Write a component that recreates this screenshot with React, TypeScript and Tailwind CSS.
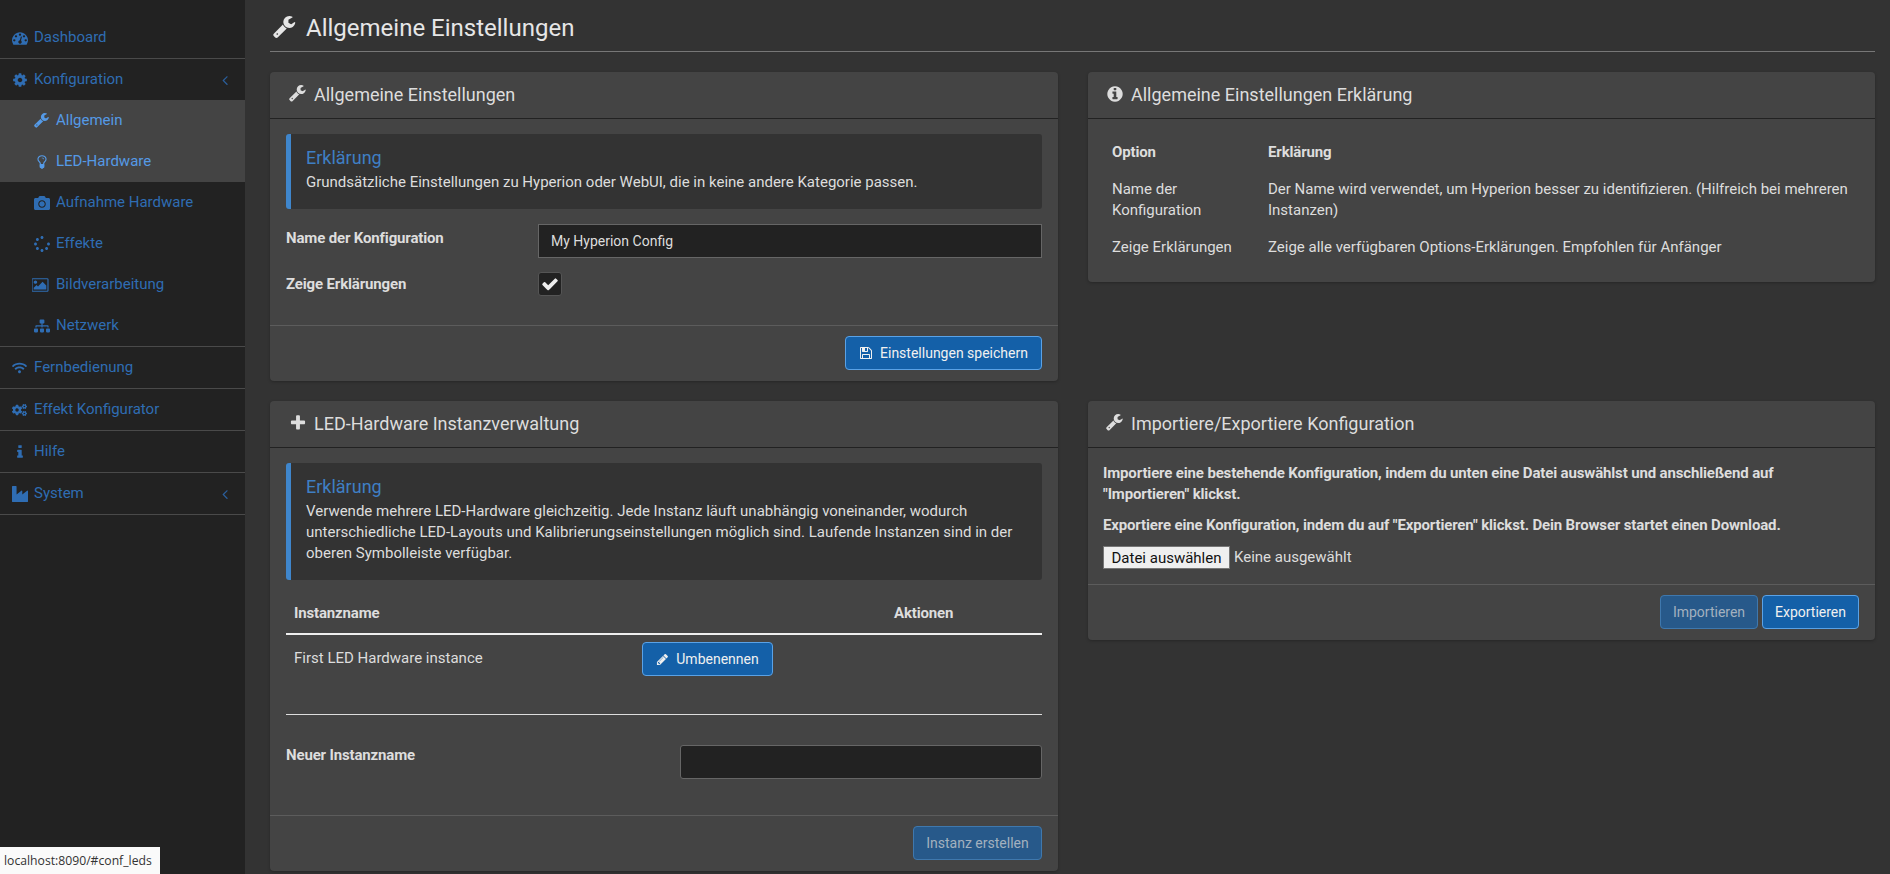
import React from "react";
import { FaCamera, FaSpinner, FaSitemap, FaWifi, FaCogs } from "react-icons/fa";

const Ic = ({ d, w = 1792 }: { d: string; w?: number }) => (
  <svg viewBox={`0 0 ${w} 1792`} height="1em" width={`${w / 1792}em`} fill="currentColor" className="shrink-0">
    <path d={d} />
  </svg>
);

const P = {
  wrench: "M384 1344q0-26-19-45t-45-19-45 19-19 45 19 45 45 19 45-19 19-45zm644-420l-682 682q-37 37-90 37-52 0-91-37l-106-108q-38-36-38-90 0-53 38-91l681-681q39 98 114.5 173.5t173.5 114.5zm634-435q0 39-23 106-47 134-164.5 217.5t-258.5 83.5q-185 0-316.5-131.5t-131.5-316.5 131.5-316.5 316.5-131.5q58 0 121.5 16.5t107.5 46.5q16 11 16 28t-16 28l-293 169v224l193 107q5-3 79-48.5t135.5-81 70.5-35.5q15 0 23.5 10t8.5 25z",
  dash: "M384 1152q0-53-37.5-90.5t-90.5-37.5-90.5 37.5-37.5 90.5 37.5 90.5 90.5 37.5 90.5-37.5 37.5-90.5zm192-448q0-53-37.5-90.5t-90.5-37.5-90.5 37.5-37.5 90.5 37.5 90.5 90.5 37.5 90.5-37.5 37.5-90.5zm428 481l101-382q6-26-7.5-48.5t-38.5-29.5-48 6.5-30 39.5l-101 382q-60 5-107 43.5t-63 98.5q-20 77 20 146t117 89 146-20 89-117q16-60-6-117t-72-91zm660-33q0-53-37.5-90.5t-90.5-37.5-90.5 37.5-37.5 90.5 37.5 90.5 90.5 37.5 90.5-37.5 37.5-90.5zm-640-640q0-53-37.5-90.5t-90.5-37.5-90.5 37.5-37.5 90.5 37.5 90.5 90.5 37.5 90.5-37.5 37.5-90.5zm448 192q0-53-37.5-90.5t-90.5-37.5-90.5 37.5-37.5 90.5 37.5 90.5 90.5 37.5 90.5-37.5 37.5-90.5zm320 448q0 261-141 483-19 29-54 29h-1402q-35 0-54-29-141-221-141-483 0-182 71-348t191-286 286-191 348-71 348 71 286 191 191 286 71 348z",
  bulb: "M1120 576q0 13-9.5 22.5t-22.5 9.5-22.5-9.5-9.5-22.5q0-46-54-71t-106-25q-13 0-22.5-9.5t-9.5-22.5 9.5-22.5 22.5-9.5q50 0 99.5 16t87 54 37.5 90zm160 0q0-72-34.5-134t-90-101.5-123-62-136.5-22.5-136.5 22.5-123 62-90 101.5-34.5 134q0 101 68 180 10 11 30.5 33t30.5 33q128 153 141 298h228q13-145 141-298 10-11 30.5-33t30.5-33q68-79 68-180zm128 0q0 155-103 268-45 49-74.5 87t-59.5 95.5-34 107.5q47 28 47 82 0 37-25 64 25 27 25 64 0 52-45 81 13 23 13 47 0 46-31.5 71t-77.5 25q-20 44-60 70t-87 26-87-26-60-70q-46 0-77.5-25t-31.5-71q0-24 13-47-45-29-45-81 0-37 25-64-25-27-25-64 0-54 47-82-4-50-34-107.5t-59.5-95.5-74.5-87q-103-113-103-268 0-99 44.5-184.5t117-142 164-89 186.5-32.5 186.5 32.5 164 89 117 142 44.5 184.5z",
  picture: "M576 576q0 80-56 136t-136 56-136-56-56-136 56-136 136-56 136 56 56 136zm1024 384v448h-1408v-192l320-320 160 160 512-512zm96-704h-1600q-13 0-22.5 9.5t-9.5 22.5v1216q0 13 9.5 22.5t22.5 9.5h1600q13 0 22.5-9.5t9.5-22.5v-1216q0-13-9.5-22.5t-22.5-9.5zm160 32v1216q0 66-47 113t-113 47h-1600q-66 0-113-47t-47-113v-1216q0-66 47-113t113-47h1600q66 0 113 47t47 113z",
  floppy: "M512 1536h768v-384h-768v384zm896 0h128v-896q0-14-10-38.5t-20-34.5l-281-281q-10-10-34-20t-39-10v416q0 40-28 68t-68 28h-576q-40 0-68-28t-28-68v-416h-128v1280h128v-416q0-40 28-68t68-28h832q40 0 68 28t28 68v416zm-384-928v-320q0-13-9.5-22.5t-22.5-9.5h-192q-13 0-22.5 9.5t-9.5 22.5v320q0 13 9.5 22.5t22.5 9.5h192q13 0 22.5-9.5t9.5-22.5zm640 32v928q0 40-28 68t-68 28h-1344q-40 0-68-28t-28-68v-1344q0-40 28-68t68-28h928q40 0 88 20t76 48l280 280q28 28 48 76t20 88z",
  check: "M1671 566q0 40-28 68l-724 724-136 136q-28 28-68 28t-68-28l-136-136-362-362q-28-28-28-68t28-68l136-136q28-28 68-28t68 28l294 295 656-657q28-28 68-28t68 28l136 136q28 28 28 68z",
  info: "M1216 1344v128q0 26-19 45t-45 19h-512q-26 0-45-19t-19-45v-128q0-26 19-45t45-19h64v-384h-64q-26 0-45-19t-19-45v-128q0-26 19-45t45-19h384q26 0 45 19t19 45v576h64q26 0 45 19t19 45zm-128-1152v192q0 26-19 45t-45 19h-256q-26 0-45-19t-19-45v-192q0-26 19-45t45-19h256q26 0 45 19t19 45z",
  pencil: "M491 1536l91-91-235-235-91 91v107h128v128h107zm523-928q0-22-22-22-10 0-17 7l-542 542q-7 7-7 17 0 22 22 22 10 0 17-7l542-542q7-7 7-17zm-54-192l416 416-832 832h-416v-416zm683 96q0 53-37 90l-166 166-416-416 166-165q36-38 90-38 53 0 91 38l235 234q37 39 37 91z",
  plus: "M1600 736v192q0 40-28 68t-68 28h-416v416q0 40-28 68t-68 28h-192q-40 0-68-28t-28-68v-416h-416q-40 0-68-28t-28-68v-192q0-40 28-68t68-28h416v-416q0-40 28-68t68-28h192q40 0 68 28t28 68v416h416q40 0 68 28t28 68z",
  infoCircle: "M1152 1376v-160q0-14-9-23t-23-9h-96v-512q0-14-9-23t-23-9h-320q-14 0-23 9t-9 23v160q0 14 9 23t23 9h96v320h-96q-14 0-23 9t-9 23v160q0 14 9 23t23 9h448q14 0 23-9t9-23zm-128-896v-160q0-14-9-23t-23-9h-192q-14 0-23 9t-9 23v160q0 14 9 23t23 9h192q14 0 23-9t9-23zm640 416q0 209-103 385.5t-279.5 279.5-385.5 103-385.5-103-279.5-279.5-103-385.5 103-385.5 279.5-279.5 385.5-103 385.5 103 279.5 279.5 103 385.5z",
  industry: "M448 0q26 0 45 19t19 45v891l536-429q17-14 40-14 26 0 45 19t19 45v379l536-429q17-14 40-14 26 0 45 19t19 45v1152q0 26-19 45t-45 19h-1664q-26 0-45-19t-19-45v-1664q0-26 19-45t45-19h384z",
  angle: "M1203 544q0 13-10 23l-393 393 393 393q10 10 10 23t-10 23l-50 50q-10 10-23 10t-23-10l-466-466q-10-10-10-23t10-23l466-466q10-10 23-10t23 10l50 50q10 10 10 23z",
  cog: "M1152 896q0-106-75-181t-181-75-181 75-75 181 75 181 181 75 181-75 75-181zm512-109v222q0 12-8 23t-20 13l-185 28q-19 54-39 91 35 50 107 138 10 12 10 25t-9 23q-27 37-99 108t-94 71q-12 0-26-9l-138-108q-44 23-91 38-16 136-29 186-7 28-36 28h-222q-14 0-24.5-8.5t-11.5-21.5l-28-184q-49-16-90-37l-141 107q-10 9-25 9-14 0-25-11-126-114-165-168-7-10-7-23 0-12 8-23 15-21 51-66.5t54-70.5q-27-50-41-99l-183-27q-13-2-21-12.5t-8-23.5v-222q0-12 8-23t19-13l186-28q14-46 39-92-40-57-107-138-10-12-10-24 0-10 9-23 26-36 98.5-107.5t94.5-71.5q13 0 26 10l138 107q44-23 91-38 16-136 29-186 7-28 36-28h222q14 0 24.5 8.5t11.5 21.5l28 184q49 16 90 37l142-107q9-9 24-9 13 0 25 10 129 119 165 170 7 8 7 22 0 12-8 23-15 21-51 66.5t-54 70.5q26 50 41 98l183 28q13 2 21 12.5t8 23.5z",
};

const Top = ({ icon, label, chevron, border = true }: { icon: React.ReactNode; label: string; chevron?: boolean; border?: boolean }) => (
  <div className={`flex items-center pl-[12px] pr-[12px] text-[#2f6db3] ${border ? "h-[42px] border-b border-[#4a4a4a]" : "h-[41px]"}`}>
    <span className="w-[15px] flex justify-center text-[16px] mr-[7px]">{icon}</span>
    <span>{label}</span>
    {chevron && <span className="ml-auto text-[16px] text-[#2b5f9c]"><Ic d={P.angle} /></span>}
  </div>
);

const Sub = ({ icon, label, active }: { icon: React.ReactNode; label: string; active?: boolean }) => (
  <div className={`h-[41px] flex items-center pl-[33px] ${active ? "bg-[#444444] text-[#559ae6]" : "text-[#2f6db3]"}`}>
    <span className="w-[17px] flex justify-center text-[16px] mr-[6px]">{icon}</span>
    <span>{label}</span>
  </div>
);

const Panel = ({ icon, title, right, children }: { icon: React.ReactNode; title: string; right?: boolean; children: React.ReactNode }) => (
  <div className="bg-[#444444] rounded-[4px] shadow-[0_1px_3px_rgba(0,0,0,0.25)] flex flex-col">
    <div className={`h-[47px] border-b border-[#222222] flex items-center pb-[2px] text-[18px] text-[#dddddd] ${right ? "pl-[18px]" : "pl-[19px]"}`}>
      <span className="w-[18px] flex justify-center text-[18px] mr-[7px]">{icon}</span>
      <span>{title}</span>
    </div>
    {children}
  </div>
);

const Callout = ({ children }: { children: React.ReactNode }) => (
  <div className="bg-[#333333] border-l-[5px] border-[#3f86cc] rounded-[3px] pl-[15px] pr-[15px] pt-[11px] pb-[16px] leading-[21px] text-[#dddddd]">
    <div className="text-[18px] leading-[26px] mb-[1px] text-[#3f7fc4]">Erklärung</div>
    {children}
  </div>
);

const Btn = ({ children, disabled }: { children: React.ReactNode; disabled?: boolean }) => (
  <button className={`w-full h-[34px] rounded-[4px] border flex items-center justify-center text-[14px] ${disabled ? "bg-[#27598a] border-[#3f78ad] text-[#a3b1bf]" : "bg-[#1460a8] border-[#5aa2e6] text-[#f0f0f0]"}`}>
    {children}
  </button>
);

export default function App() {
  return (
    <div className="relative flex h-screen w-full overflow-hidden bg-[#333333] text-[15px] leading-[21px] text-[#dddddd] font-['Roboto',sans-serif]">
      <aside className="w-[245px] shrink-0 bg-[#222222] pt-[17px]">
        <Top icon={<Ic d={P.dash} />} label="Dashboard" />
        <Top border={false} icon={<Ic d={P.cog} />} label="Konfiguration" chevron />
        <Sub active icon={<Ic d={P.wrench} />} label="Allgemein" />
        <Sub active icon={<Ic d={P.bulb} />} label="LED-Hardware" />
        <Sub icon={<FaCamera />} label="Aufnahme Hardware" />
        <Sub icon={<FaSpinner />} label="Effekte" />
        <Sub icon={<Ic d={P.picture} w={2048} />} label="Bildverarbeitung" />
        <Sub icon={<FaSitemap />} label="Netzwerk" />
        <div className="border-t border-[#4a4a4a]">
          <Top icon={<FaWifi />} label="Fernbedienung" />
          <Top icon={<FaCogs />} label="Effekt Konfigurator" />
          <Top icon={<Ic d={P.info} />} label="Hilfe" />
          <Top icon={<Ic d={P.industry} />} label="System" chevron />
        </div>
      </aside>

      <main className="flex-1 pl-[25px] pr-[15px] min-w-0">
        <div className="h-[52px] border-b border-[#777777] flex items-center pt-[5px] pl-[3px] text-[24px] text-[#e6e6e6]">
          <span className="mr-[9px] flex"><Ic d={P.wrench} /></span>
          <span>Allgemeine Einstellungen</span>
        </div>

        <div className="grid grid-cols-[788px_787px] gap-x-[30px] gap-y-[20px] mt-[20px] items-start">
          <Panel icon={<Ic d={P.wrench} />} title="Allgemeine Einstellungen">
            <div className="px-[16px] pt-[15px] pb-[29px]">
              <Callout>Grundsätzliche Einstellungen zu Hyperion oder WebUI, die in keine andere Kategorie passen.</Callout>
              <div className="flex mt-[15px]">
                <label className="w-[252px] font-bold tracking-[-0.15px] pt-[4px]">Name der Konfiguration</label>
                <div className="flex-1 h-[34px] bg-[#222222] border border-[#666666] pl-[12px] flex items-center text-[14px]">My Hyperion Config</div>
              </div>
              <div className="flex mt-[14px] items-center">
                <label className="w-[252px] font-bold tracking-[-0.15px]">Zeige Erklärungen</label>
                <div className="w-[24px] h-[24px] bg-[#222222] border border-[#555555] rounded-[3px] flex items-center justify-center text-[#eeeeee] text-[18px]"><Ic d={P.check} /></div>
              </div>
            </div>
            <div className="border-t border-[#5c5c5c] pt-[10px] pb-[11px] pr-[16px] flex justify-end">
              <div className="w-[197px]">
                <Btn><span className="mr-[7px] text-[14px] flex"><Ic d={P.floppy} /></span>Einstellungen speichern</Btn>
              </div>
            </div>
          </Panel>

          <Panel right icon={<Ic d={P.infoCircle} />} title="Allgemeine Einstellungen Erklärung">
            <div className="px-[24px] pt-[23px] pb-[24px]">
              <div className="flex font-bold tracking-[-0.15px]"><span className="w-[156px]">Option</span><span>Erklärung</span></div>
              <div className="flex mt-[16px]">
                <span className="w-[156px] shrink-0 pr-[40px]">Name der Konfiguration</span>
                <span className="pr-[2px]">Der Name wird verwendet, um Hyperion besser zu identifizieren. (Hilfreich bei mehreren Instanzen)</span>
              </div>
              <div className="flex mt-[16px]"><span className="w-[156px]">Zeige Erklärungen</span><span>Zeige alle verfügbaren Options-Erklärungen. Empfohlen für Anfänger</span></div>
            </div>
          </Panel>

          <Panel icon={<Ic d={P.plus} />} title="LED-Hardware Instanzverwaltung">
            <div className="px-[16px] pt-[15px]">
              <Callout>Verwende mehrere LED-Hardware gleichzeitig. Jede Instanz läuft unabhängig voneinander, wodurch unterschiedliche LED-Layouts und Kalibrierungseinstellungen möglich sind. Laufende Instanzen sind in der oberen Symbolleiste verfügbar.</Callout>
              <div className="h-[55px] border-b-2 border-[#eeeeee] flex items-center pl-[8px] pt-[14px] font-bold tracking-[-0.15px]">
                <span className="w-[600px]">Instanzname</span><span>Aktionen</span>
              </div>
              <div className="flex pt-[7px] pl-[8px] h-[80px] border-b border-[#dddddd]">
                <span className="w-[348px] pt-[6px]">First LED Hardware instance</span>
                <div className="w-[131px]"><Btn><span className="mr-[7px] text-[13px] flex"><Ic d={P.pencil} /></span>Umbenennen</Btn></div>
              </div>
              <div className="flex mt-[30px] mb-[36px]">
                <label className="w-[394px] font-bold tracking-[-0.15px]">Neuer Instanzname</label>
                <div className="flex-1 h-[34px] bg-[#222222] border border-[#666666] rounded-[3px]" />
              </div>
            </div>
            <div className="border-t border-[#5c5c5c] pt-[10px] pb-[11px] pr-[16px] flex justify-end">
              <div className="w-[129px]"><Btn disabled>Instanz erstellen</Btn></div>
            </div>
          </Panel>

          <Panel right icon={<Ic d={P.wrench} />} title="Importiere/Exportiere Konfiguration">
            <div className="px-[15px] pt-[15px] pb-[15px]">
              <p className="font-bold tracking-[-0.15px]">Importiere eine bestehende Konfiguration, indem du unten eine Datei auswählst und anschließend auf "Importieren" klickst.</p>
              <p className="mt-[10px] font-bold tracking-[-0.15px]">Exportiere eine Konfiguration, indem du auf "Exportieren" klickst. Dein Browser startet einen Download.</p>
              <div className="flex items-center mt-[10px]">
                <button className="w-[127px] h-[23px] bg-[#efefef] border border-[#767676] text-[#111111] leading-[20px]">Datei auswählen</button>
                <span className="ml-[4px]">Keine ausgewählt</span>
              </div>
            </div>
            <div className="border-t border-[#5c5c5c] pt-[10px] pb-[11px] pr-[16px] flex justify-end gap-[4px]">
              <div className="w-[98px]"><Btn disabled>Importieren</Btn></div>
              <div className="w-[97px]"><Btn>Exportieren</Btn></div>
            </div>
          </Panel>
        </div>
      </main>

      <div className="absolute left-0 bottom-0 w-[160px] h-[27px] bg-[#fafafa] text-[#333333] text-[12.2px] leading-[27px] pl-[4px] font-['Open_Sans',sans-serif]">localhost:8090/#conf_leds</div>
    </div>
  );
}
